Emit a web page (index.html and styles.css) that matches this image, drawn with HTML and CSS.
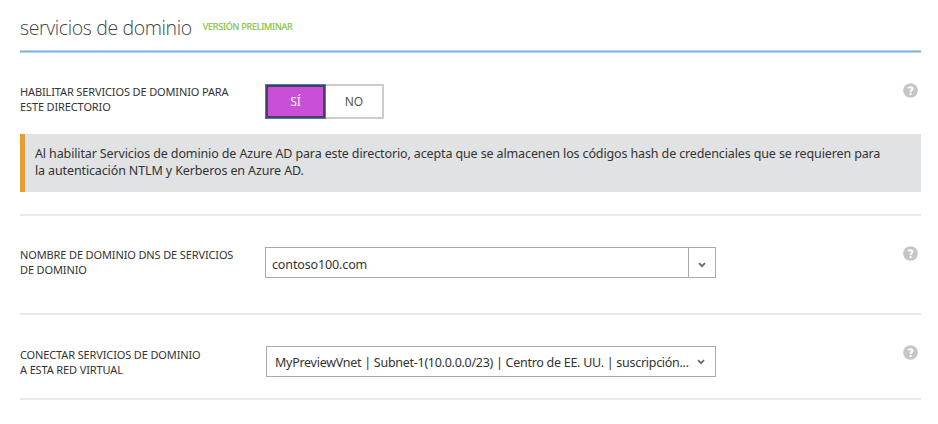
FILE: index.html
```html
<!DOCTYPE html>
<html lang="es">
<head>
<meta charset="utf-8">
<title>servicios de dominio</title>
<link rel="stylesheet" href="styles.css">
</head>
<body>
<main class="page">
  <header class="header">
    <h1 class="title">servicios de dominio</h1>
    <span class="tag">VERSIÓN PRELIMINAR</span>
  </header>

  <section class="row row-enable">
    <div class="label">HABILITAR SERVICIOS DE DOMINIO PARA<br>ESTE DIRECTORIO</div>
    <div class="toggle">
      <button class="option option-on" type="button">SÍ</button>
      <button class="option option-off" type="button">NO</button>
    </div>
    <svg class="help" viewBox="0 0 15 15"><circle cx="7.5" cy="7.5" r="7.3"/><path d="M5.2 5.3C5.5 3.9 9.8 3.5 9.6 5.8C9.5 7.2 7.6 7.1 7.6 8.9M7.6 10.1V12"/></svg>
  </section>

  <aside class="notice">Al habilitar Servicios de dominio de Azure AD para este directorio, acepta que se almacenen los códigos hash de credenciales que se requieren para<br>la autenticación NTLM y Kerberos en Azure AD.</aside>

  <section class="row row-dns">
    <div class="label">NOMBRE DE DOMINIO DNS DE SERVICIOS<br>DE DOMINIO</div>
    <div class="combo">
      <span class="combo-value">contoso100.com</span>
      <span class="combo-arrow"><svg class="chevron" viewBox="0 0 8 6"><path d="M1 1.2L4 4.2L7 1.2"/></svg></span>
    </div>
    <svg class="help" viewBox="0 0 15 15"><circle cx="7.5" cy="7.5" r="7.3"/><path d="M5.2 5.3C5.5 3.9 9.8 3.5 9.6 5.8C9.5 7.2 7.6 7.1 7.6 8.9M7.6 10.1V12"/></svg>
  </section>

  <section class="row row-vnet">
    <div class="label">CONECTAR SERVICIOS DE DOMINIO<br>A ESTA RED VIRTUAL</div>
    <div class="select">
      <span class="select-value">MyPreviewVnet | Subnet-1(10.0.0.0/23) | Centro de EE. UU. | suscripción...</span>
      <svg class="chevron" viewBox="0 0 8 6"><path d="M1 1.2L4 4.2L7 1.2"/></svg>
    </div>
    <svg class="help" viewBox="0 0 15 15"><circle cx="7.5" cy="7.5" r="7.3"/><path d="M5.2 5.3C5.5 3.9 9.8 3.5 9.6 5.8C9.5 7.2 7.6 7.1 7.6 8.9M7.6 10.1V12"/></svg>
  </section>
</main>
</body>
</html>
```
FILE: styles.css
```css
* { box-sizing: border-box; }

body {
  margin: 0;
  background: #fff;
  color: #333;
  font-family: "Noto Sans", "Open Sans", sans-serif;
}

.page { width: 901px; margin-left: 20px; }

.header {
  display: flex;
  align-items: flex-start;
  height: 53px;
  background: linear-gradient(#b3d5f0 0 1px, #82b5df 1px 2px, #b3d5f0 2px) bottom / 100% 3px no-repeat;
}

.title {
  margin: 14px 11px 0 0;
  color: #444;
  font: 300 19.5px/28px "Open Sans", sans-serif;
  letter-spacing: -0.38px;
  white-space: nowrap;
}

.tag {
  margin-top: 20px;
  color: #84c441;
  font-size: 9px;
  line-height: 13px;
  letter-spacing: -0.21px;
  -webkit-text-stroke: 0.2px #84c441;
  white-space: nowrap;
}

.row {
  display: grid;
  grid-template-columns: 245px 1fr 15px;
  align-items: start;
  margin-right: 3px;
}

.label {
  font-size: 11px;
  line-height: 15px;
  letter-spacing: -0.13px;
  white-space: nowrap;
}

.help { width: 15px; height: 15px; }
.help circle { fill: #c6c6c6; }
.help path { fill: none; stroke: #fff; stroke-width: 2; }

.chevron { flex: none; width: 8px; height: 6px; }
.chevron path { fill: none; stroke: #666; stroke-width: 1.7; }

.row-enable { height: 81px; padding-top: 30px; }
.row-enable .label { margin-top: 1px; }

.toggle { display: flex; margin-top: 1px; }

.option {
  height: 35px;
  padding: 1px 0 0;
  font: 12px/30px "Noto Sans", sans-serif;
}

.option-on {
  width: 61px;
  border: 3px solid #46425c;
  outline: 1px solid #447cc0;
  outline-offset: -1px;
  background: #c94fd8;
  color: #fff;
  line-height: 28px;
}

.option-off {
  width: 58px;
  border: 2px solid #ccc;
  border-left: 0;
  background: #fff;
  color: #555;
}

.notice {
  height: 58px;
  padding: 11px 0 0 10px;
  border-left: 5px solid #e49c37;
  background: #e1e2e4;
  font-size: 12.5px;
  line-height: 17px;
  letter-spacing: -0.127px;
  white-space: nowrap;
}

.row-dns {
  height: 99px;
  margin: 22px 0 0;
  padding: 31px 3px 0 0;
  border-top: 2px solid #e9e9e9;
}

.row-dns .help,
.row-vnet .help { margin-top: -1px; }

.combo {
  display: flex;
  width: 451px;
  height: 31px;
  border: 1px solid #aaa;
}

.combo-value {
  flex: 1;
  padding-left: 6px;
  font-size: 12.5px;
  line-height: 33px;
  letter-spacing: -0.127px;
}

.combo-arrow {
  display: flex;
  align-items: center;
  justify-content: center;
  width: 27px;
  padding-top: 4px;
  border-left: 1px solid #aaa;
}

.row-vnet {
  height: 87px;
  margin: 0;
  padding: 31px 3px 0 0;
  border-top: 2px solid #e9e9e9;
  border-bottom: 2px solid #e9e9e9;
}

.row-vnet .label { margin-top: 1px; }

.select {
  display: flex;
  align-items: center;
  justify-content: space-between;
  width: 450px;
  height: 31px;
  margin-left: 1px;
  padding: 1px 10px 0 8px;
  border: 1px solid #aaa;
  font-size: 12.5px;
  letter-spacing: -0.275px;
  white-space: nowrap;
}
```
